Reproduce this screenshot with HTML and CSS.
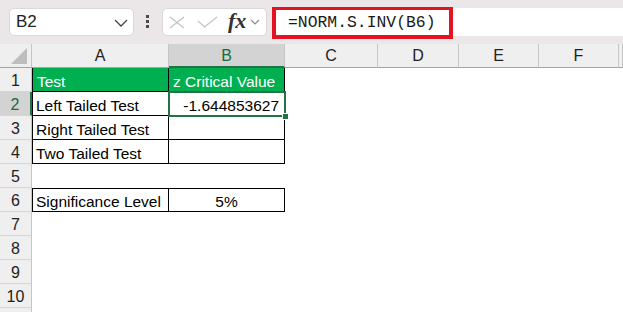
FILE: index.html
```html
<!DOCTYPE html>
<html lang="en">
<head>
  <meta charset="UTF-8">
  <title>z Critical Value</title>
  <link rel="stylesheet" href="styles.css">
</head>
<body>

  <div class="toolbar">
    <div class="namebox">
      <span>B2</span>
      <svg class="chev" width="14" height="8" viewBox="0 0 14 8"><path d="M1 1 L7 7 L13 1" fill="none" stroke="#444" stroke-width="1.3"/></svg>
    </div>
    <div class="dots"><i></i><i></i><i></i></div>
    <div class="fxbox">
      <svg width="16" height="13" viewBox="0 0 16 13"><path d="M1 1 L15 12 M15 1 L1 12" fill="none" stroke="#c3c3c3" stroke-width="1.3"/></svg>
      <svg width="21" height="12" viewBox="0 0 21 12"><path d="M1 5 L7.5 11 L20 1" fill="none" stroke="#c3c3c3" stroke-width="1.3"/></svg>
      <span class="fx">fx</span>
      <svg width="10" height="6" viewBox="0 0 10 6"><path d="M1 1 L5 5 L9 1" fill="none" stroke="#8a8a8a" stroke-width="1.2"/></svg>
    </div>
    <div class="formula">
      <span class="formula-text">=NORM.S.INV(B6)</span>
      <div class="mark"></div>
    </div>
  </div>

  <div class="sheet">
    <div class="corner"><svg width="16" height="16" viewBox="0 0 16 16"><path d="M16 0 L16 16 L0 16 Z" fill="#bdbdbd"/></svg></div>
    <div class="ch">A</div>
    <div class="ch sel">B</div>
    <div class="ch">C</div>
    <div class="ch">D</div>
    <div class="ch">E</div>
    <div class="ch">F</div>
    <div class="ch"></div>

    <div class="rh">1</div>
    <div class="cell bd bl head">Test</div>
    <div class="cell bd head">z Critical Value</div>
    <div class="rest"></div>

    <div class="rh sel">2</div>
    <div class="cell bd bl">Left Tailed Test</div>
    <div class="cell bd num active">-1.644853627</div>
    <div class="rest"></div>

    <div class="rh">3</div>
    <div class="cell bd bl">Right Tailed Test</div>
    <div class="cell bd"></div>
    <div class="rest"></div>

    <div class="rh">4</div>
    <div class="cell bd bl">Two Tailed Test</div>
    <div class="cell bd"></div>
    <div class="rest"></div>

    <div class="rh">5</div>
    <div class="cell"></div>
    <div class="cell"></div>
    <div class="rest"></div>

    <div class="rh">6</div>
    <div class="cell bd bl bt">Significance Level</div>
    <div class="cell bd bt mid">5%</div>
    <div class="rest"></div>

    <div class="rh">7</div>
    <div class="cell"></div>
    <div class="cell"></div>
    <div class="rest"></div>

    <div class="rh">8</div>
    <div class="cell"></div>
    <div class="cell"></div>
    <div class="rest"></div>

    <div class="rh">9</div>
    <div class="cell"></div>
    <div class="cell"></div>
    <div class="rest"></div>

    <div class="rh">10</div>
    <div class="cell"></div>
    <div class="cell"></div>
    <div class="rest"></div>

    <div class="rh"></div>
    <div class="cell"></div>
    <div class="cell"></div>
    <div class="rest"></div>
  </div>

</body>
</html>
```

FILE: styles.css
```css
* {
  box-sizing: border-box;
}

body {
  margin: 0;
  width: 623px;
  height: 312px;
  overflow: hidden;
  background: white;
  font-family: "Liberation Sans", Arial, sans-serif;
  color: #000;
}

/* formula bar */
.toolbar {
  height: 44px;
  background-color: #ebe7e9;
  display: flex;
  align-items: flex-start;
  padding: 8px 0 0 9px;
}

.namebox {
  width: 125px;
  height: 28px;
  background: white;
  border: 1px solid #dcd8da;
  border-radius: 5px;
  display: flex;
  align-items: center;
  justify-content: space-between;
  padding: 0 5px 0 6px;
  font-size: 17px;
  color: #222;
}

.namebox .chev {
  margin-top: 2px;
}

.dots {
  width: 3px;
  margin: 7px 13px 0 12px;
  display: flex;
  flex-direction: column;
  gap: 2px;
}

.dots i {
  display: block;
  width: 3px;
  height: 3px;
  background: #4a4a4a;
}

.fxbox {
  width: 105px;
  height: 28px;
  background: white;
  border: 1px solid #dcd8da;
  border-radius: 5px;
  display: flex;
  align-items: center;
  padding: 0 0 0 6px;
}

.fxbox svg:nth-child(1) {
  margin-right: 12px;
}

.fxbox svg:nth-child(2) {
  margin-right: 10px;
  margin-bottom: 1px;
}

.fx {
  font-family: "Liberation Serif", serif;
  font-style: italic;
  font-weight: bold;
  font-size: 22px;
  color: #333;
  margin-right: 4px;
  line-height: 1;
  margin-top: -2px;
}

.formula {
  position: relative;
  flex: 1;
  height: 28px;
  margin-left: 5px;
  background: white;
  display: flex;
  align-items: center;
  padding-left: 16px;
}

.formula-text {
  font-family: "Liberation Mono", monospace;
  font-size: 16.4px;
  color: #1a1a1a;
}

.mark {
  position: absolute;
  left: 0;
  top: -1px;
  width: 181px;
  height: 32px;
  border: 4px solid #e3141f;
  border-top-width: 3px;
}

/* grid */
.sheet {
  display: grid;
  grid-template-columns: 32px 137px 116px 93px 81px 80px 80px 1fr;
  grid-auto-rows: 24px;
  font-size: 15.5px;
}

.corner {
  background: #efefef;
  border-right: 1px solid #c6c6c6;
  border-bottom: 1px solid #a3a3a3;
  display: flex;
  align-items: flex-end;
  justify-content: flex-end;
  padding: 0 4px 3px 0;
}

.ch {
  background: #efefef;
  border-right: 1px solid #c6c6c6;
  border-bottom: 1px solid #a3a3a3;
  text-align: center;
  line-height: 24px;
  font-size: 16px;
  color: #222;
}

.ch.sel {
  background: #d3d3d3;
  color: #1a6b3c;
  border-bottom: 2px solid #217346;
}

.rh {
  background: #efefef;
  border-right: 1px solid #c6c6c6;
  border-bottom: 1px solid #d6d6d6;
  text-align: center;
  line-height: 24px;
  padding-top: 1px;
  font-size: 16px;
  color: #222;
}

.rh.sel {
  background: #d3d3d3;
  color: #1a6b3c;
  border-right: 2px solid #217346;
}

.cell {
  display: flex;
  align-items: flex-end;
  padding: 0 3px;
  line-height: 18px;
  white-space: nowrap;
}

.rest {
  grid-column: span 5;
}

.bd {
  border-right: 1px solid #000;
  border-bottom: 1px solid #000;
}

.bl {
  border-left: 1px solid #000;
}

.bt {
  border-top: 1px solid #000;
}

.head {
  background-color: #00b050;
  color: white;
  padding-left: 4px;
}

.num {
  justify-content: flex-end;
  padding-right: 5px;
}

.mid {
  justify-content: center;
}

/* active cell */
.active {
  position: relative;
}

.active::after {
  content: "";
  position: absolute;
  left: -1px;
  top: -1px;
  right: -2px;
  bottom: -2px;
  border: 2px solid #217346;
}

.active::before {
  content: "";
  position: absolute;
  right: -4px;
  bottom: -4px;
  width: 5px;
  height: 5px;
  background: #217346;
  outline: 1px solid white;
  z-index: 1;
}
```
